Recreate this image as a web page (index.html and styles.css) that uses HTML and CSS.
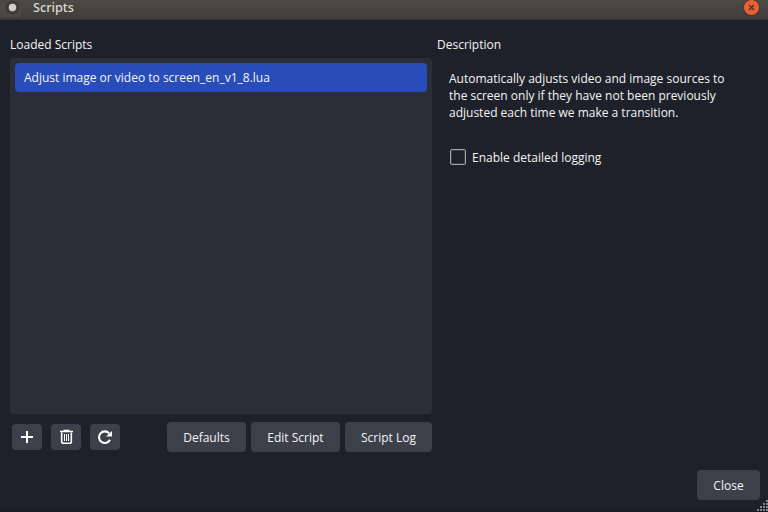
FILE: index.html
```html
<!DOCTYPE html>
<html lang="en">
<head>
<meta charset="utf-8">
<title>Scripts</title>
<link rel="stylesheet" href="styles.css">
</head>
<body>
<div class="window">
  <header class="titlebar">
    <svg class="app-icon" width="21" height="19" viewBox="0 0 21 19">
      <rect width="21" height="17" fill="#4b4944"/>
      <circle cx="12.5" cy="7.5" r="6.7" fill="#35342f"/>
      <circle cx="12.5" cy="7.5" r="5.6" fill="#45433f"/>
      <circle cx="12.5" cy="7.5" r="3.7" fill="#d2cfc9"/>
    </svg>
    <span class="title">Scripts</span>
    <svg class="close-icon" width="18" height="17" viewBox="0 0 18 17">
      <circle cx="9.5" cy="7.5" r="8.3" fill="#34332f"/>
      <circle cx="9.5" cy="7.5" r="7.6" fill="#ee5f32"/>
      <path d="M7 5l5 5M12 5l-5 5" stroke="#46332a" stroke-width="1.4"/>
    </svg>
  </header>
  <main class="content">
    <section class="scripts">
      <h2 class="heading">Loaded Scripts</h2>
      <ul class="list"><li class="item"><span>Adjust image or video to screen_en_v1_8.lua</span></li></ul>
      <div class="toolbar">
        <button class="icon-button" aria-label="Add">
          <svg width="30" height="26" viewBox="0 0 30 26"><path d="M15 7v12M9 13h12" stroke="#fefefe" stroke-width="2" fill="none"/></svg>
        </button>
        <button class="icon-button" aria-label="Remove">
          <svg width="30" height="26" viewBox="0 0 30 26" fill="none" stroke="#fefefe"><path d="M9 7.5h13M12.5 6.5h6" stroke-width="1.5"/><path d="M10.7 8.5v9q0 1.8 1.8 1.8h6q1.8 0 1.8-1.8v-9" stroke-width="1.6"/><path d="M13.5 10v7M15.5 10v7M17.5 10v7" stroke-width="1"/></svg>
        </button>
        <button class="icon-button" aria-label="Reload">
          <svg width="30" height="26" viewBox="0 0 30 26"><path d="M19.2 9.4A5.8 5.8 0 1 0 20 15.8" stroke="#fefefe" stroke-width="2.1" fill="none"/><path d="M22 7v5.5h-6z" fill="#fefefe"/></svg>
        </button>
        <div class="actions">
          <button class="button defaults"><span>Defaults</span></button>
          <button class="button edit"><span>Edit Script</span></button>
          <button class="button log"><span>Script Log</span></button>
        </div>
      </div>
    </section>
    <section class="details">
      <h2 class="heading">Description</h2>
      <p class="description">Automatically adjusts video and image sources to<br>the screen only if they have not been previously<br>adjusted each time we make a transition.</p>
      <label class="option"><span class="checkbox"></span><span>Enable detailed logging</span></label>
    </section>
  </main>
  <footer class="footer"><button class="button close"><span>Close</span></button></footer>
  <svg class="grip" width="11" height="11" viewBox="0 0 11 11" fill="#83858a">
    <path d="M9 0h2v2H9zM6 3h2v2H6zM9 3h2v2H9zM3 6h2v2H3zM6 6h2v2H6zM9 6h2v2H9zM0 9h2v2H0zM3 9h2v2H3zM6 9h2v2H6zM9 9h2v2H9z"/>
  </svg>
</div>
</body>
</html>
```

FILE: styles.css
```css
* { box-sizing: border-box; }
body {
  margin: 0;
  background: #1f212a;
  color: #f4f4f5;
  font: 12px/17px "Open Sans", "Noto Sans", sans-serif;
}
.window {
  position: relative;
  display: flex;
  flex-direction: column;
  width: 768px;
  height: 512px;
  border-bottom: 1px solid #1b1c25;
}
.titlebar {
  display: flex;
  height: 20px;
  padding-right: 8px;
  background: linear-gradient(#4c4b45, #3e3d38);
  border-bottom: 1px solid #353530;
}
.title {
  margin: 0 auto 0 12px;
  color: #dfdbd2;
  font: 500 12.7px/15px "Noto Sans", sans-serif;
}
.content { display: flex; height: 432px; padding: 16px 10px 0; }
.scripts { width: 422px; }
.details { margin-left: 5px; }
.heading { margin: 0; font-size: 12px; font-weight: 400; line-height: 17px; }
.list {
  height: 356px;
  margin: 5px 0 0;
  padding: 5px;
  list-style: none;
  background: #2b2d38;
  border-radius: 4px;
}
.item {
  height: 29px;
  padding-left: 9px;
  line-height: 29px;
  background: #284cb8;
  border-radius: 4px;
}
.toolbar { display: flex; align-items: center; gap: 9px; height: 30px; margin-top: 8px; padding-left: 2px; }
button { display: block; padding: 0; border: 0; border-radius: 4px; background: #3c404b; color: #f4f4f5; font: inherit; }
.icon-button { width: 30px; height: 26px; }
.icon-button svg { display: block; }
.actions { display: flex; gap: 5px; margin-left: auto; }
.button { height: 30px; padding-top: 1px; line-height: 29px; }
.defaults { width: 79px; }
.edit { width: 89px; }
.log { width: 87px; }
.description { margin: 17px 0 0 12px; white-space: nowrap; }
.option { display: flex; align-items: flex-start; gap: 6px; margin: 28px 0 0 13px; }
.checkbox { width: 16px; height: 16px; border: 1px solid #a5a6aa; border-radius: 2px; box-shadow: inset 0 0 0 1px #3a3c44; }
.footer { display: flex; justify-content: flex-end; padding: 18px 8px 0; }
.close { width: 63px; }
.grip { position: absolute; right: 0; bottom: 0; }
```
